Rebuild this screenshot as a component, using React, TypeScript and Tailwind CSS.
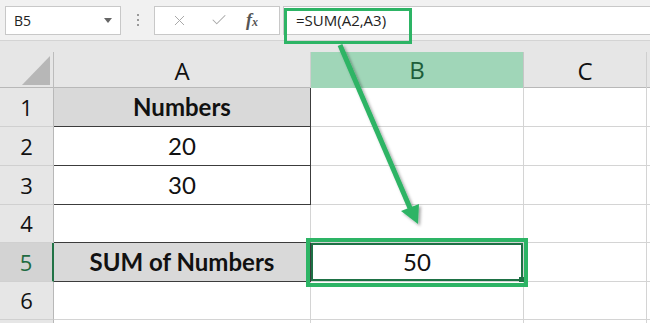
import { Check, X } from 'lucide-react';

const cellFont = { fontFamily: 'Lato, "Liberation Sans", sans-serif' };
const uiFont = { fontFamily: '"Open Sans", "Noto Sans", sans-serif' };

type Row = {
  n: number;
  label?: string;
  a?: string;
  b?: string;
  boldA?: boolean;
  shadedA?: boolean;
  boxedA?: boolean;
  h: string;
};

const rows: Row[] = [
  { n: 1, label: '1', a: 'Numbers', boldA: true, shadedA: true, boxedA: true, h: 'h-[39px]' },
  { n: 2, label: '2', a: '20', boxedA: true, h: 'h-[39px]' },
  { n: 3, label: '3', a: '30', boxedA: true, h: 'h-[39px]' },
  { n: 4, label: '4', h: 'h-[38px]' },
  { n: 5, label: '5', a: 'SUM of Numbers', b: '50', boldA: true, shadedA: true, boxedA: true, h: 'h-[39px]' },
  { n: 6, label: '6', h: 'h-[38px]' },
  { n: 7, h: 'h-[38px]' },
];

function Toolbar() {
  return (
    <div className="flex h-[41px] items-center border-b border-[#d4d4d4] bg-[#f1f1f1]" style={uiFont}>
      <div className="ml-[5px] flex h-[29px] w-[116px] items-center justify-between border border-[#c8c8c8] bg-white pl-[8px] pr-[8px] text-[14px] text-[#222]">
        <span>B5</span>
        <span className="h-0 w-0 border-x-[4px] border-t-[5px] border-x-transparent border-t-[#666]" />
      </div>
      <div className="ml-[16px] flex flex-col gap-[3px]">
        <span className="h-[2px] w-[2px] bg-[#9a9a9a]" />
        <span className="h-[2px] w-[2px] bg-[#9a9a9a]" />
        <span className="h-[2px] w-[2px] bg-[#9a9a9a]" />
      </div>
      <div className="ml-[15px] flex h-[29px] w-[126px] items-center border border-[#c8c8c8] bg-white">
        <X size={17} strokeWidth={1.4} className="ml-[16px] text-[#a8a8a8]" />
        <Check size={18} strokeWidth={1.4} className="ml-[22px] text-[#a8a8a8]" />
        <span
          className="ml-[18px] text-[18px] font-bold italic leading-none text-[#555]"
          style={{ fontFamily: '"Liberation Serif", serif' }}
        >
          f<span className="text-[12px]">x</span>
        </span>
      </div>
      <div className="ml-[3px] flex h-[29px] flex-1 items-center border border-r-0 border-[#c8c8c8] bg-white pl-[12px] text-[15px] text-[#222]">
        =SUM(A2,A3)
      </div>
    </div>
  );
}

function Header() {
  return (
    <div className="flex flex-col bg-[#e6e6e6]" style={uiFont}>
      <div className="h-[11px]" />
      <div className="grid h-[36px] grid-cols-[54px_257px_213px_123px_1fr] border-b border-[#b8b8b8]">
        <div className="relative border-r border-[#bcbcbc]">
          <svg className="absolute left-[22px] top-[4px]" width="28" height="29" viewBox="0 0 28 29">
            <polygon points="28,0 28,29 0,29" fill="#b7b7b7" />
          </svg>
        </div>
        <div className="flex items-center justify-center border-r border-[#cfcfcf] text-[24px] text-[#111]">A</div>
        <div className="flex items-center justify-center border-b-2 border-b-[#1e7145] border-r border-r-[#c6c6c6] bg-[#a0d6b8] text-[24px] text-[#1d5e3a]">
          B
        </div>
        <div className="flex items-center justify-center border-r border-[#cfcfcf] text-[24px] text-[#111]">C</div>
        <div />
      </div>
    </div>
  );
}

function Grid() {
  return (
    <div className="flex flex-col">
      {rows.map((r) => {
        const selected = r.n === 5;
        return (
          <div key={r.n} className={`grid ${r.h} grid-cols-[54px_257px_213px_123px_1fr]`}>
            <div
              className={`flex items-center justify-center border-b border-[#d0d0d0] text-[22px] ${
                selected
                  ? 'border-r-2 border-r-[#217346] bg-[#d3d3d3] text-[#1e6b41]'
                  : 'border-r border-r-[#b8b8b8] bg-[#e6e6e6] text-[#111]'
              }`}
              style={uiFont}
            >
              {r.label}
            </div>
            <div
              className={`flex items-center justify-center border-b border-r text-[24px] text-[#111] ${
                r.boxedA ? 'border-[#3c3c3c]' : 'border-[#d4d4d4]'
              } ${r.n === 4 ? 'border-b-[#3c3c3c]' : ''} ${r.shadedA ? 'bg-[#d9d9d9]' : 'bg-white'} ${
                r.boldA ? 'font-bold' : ''
              }`}
              style={cellFont}
            >
              {r.a}
            </div>
            <div
              className={`relative flex items-center justify-center border-b border-r border-[#d4d4d4] bg-white text-[24px] text-[#111] ${
                selected ? 'shadow-[inset_0_0_0_2px_#1e7145]' : ''
              }`}
              style={cellFont}
            >
              {r.b}
              {selected ? <span className="absolute -bottom-[2px] -right-[2px] h-[6px] w-[6px] bg-[#1e7145]" /> : null}
            </div>
            <div className="border-b border-r border-[#d4d4d4] bg-white" />
            <div className="border-b border-[#d4d4d4] bg-white" />
          </div>
        );
      })}
    </div>
  );
}

export default function App() {
  return (
    <div className="relative h-[323px] w-[650px] overflow-hidden bg-white">
      <Toolbar />
      <Header />
      <Grid />

      {/* annotations */}
      <div className="pointer-events-none absolute left-[284px] top-[8px] h-[36px] w-[128px] border-[3px] border-[#2db465]" />
      <div className="pointer-events-none absolute left-[306px] top-[238px] h-[49px] w-[222px] border-[4px] border-[#2db465]" />
      <svg className="pointer-events-none absolute left-0 top-0" width="650" height="323" viewBox="0 0 650 323">
        <defs>
          <filter id="sh" x="-20%" y="-20%" width="140%" height="140%">
            <feDropShadow dx="2" dy="2" stdDeviation="1.6" floodColor="#000" floodOpacity="0.35" />
          </filter>
        </defs>
        <g filter="url(#sh)">
          <line x1="340" y1="45" x2="410" y2="208" stroke="#2db465" strokeWidth="5" />
          <polygon points="418,224 419,204 401,211" fill="#2db465" />
        </g>
      </svg>
    </div>
  );
}
